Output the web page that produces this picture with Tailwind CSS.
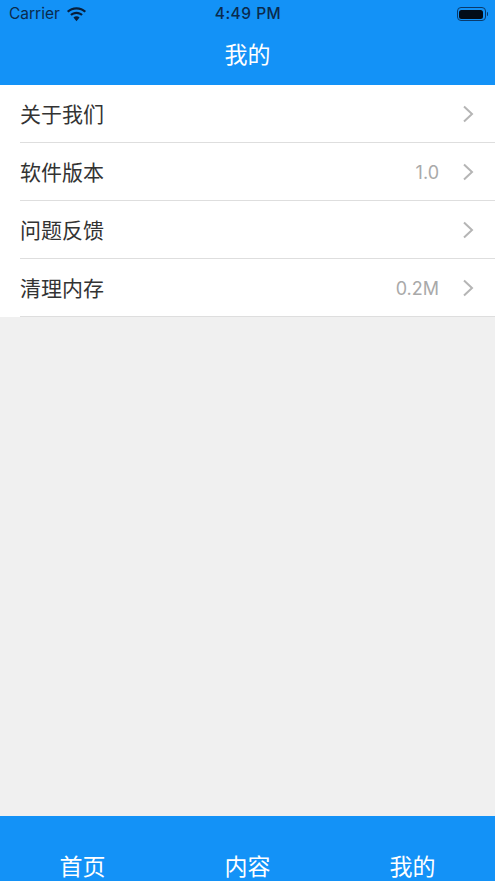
<!DOCTYPE html>
<html lang="zh">
<head>
<meta charset="utf-8">
<title>我的</title>
<script src="https://cdn.jsdelivr.net/npm/@tailwindcss/browser@4"></script>
</head>
<body class="bg-[#f0f0f0] font-['Noto_Sans_CJK_SC','Noto_Sans',sans-serif]">
<div class="flex flex-col w-[495px] h-[881px] overflow-hidden">
    <!-- Header -->
    <div class="bg-[#1392f7] h-[85px] shrink-0 flex flex-col">
        <div class="h-[28px] flex items-center justify-between pl-[9px] pr-[7px] text-[#0a2a4d] font-['Inter',sans-serif]">
            <div class="flex items-center gap-[6px] w-[150px]">
                <span class="text-[15.500px]">Carrier</span>
                <svg width="21" height="15" viewBox="0 0 20 14" fill="#071f3c">
                    <path d="M10 2.200c3 0 5.600 1.100 7.600 3l1.500-1.600C16.700 1.300 13.500 0 10 0S3.300 1.300.9 3.600l1.500 1.600c2-1.900 4.600-3 7.600-3z"/>
                    <path d="M10 6.500c1.800 0 3.300.7 4.500 1.800l1.500-1.600C14.400 5.200 12.300 4.300 10 4.300S5.600 5.200 4 6.700l1.500 1.600C6.700 7.200 8.200 6.500 10 6.500z"/>
                    <path d="M10 8.700c-1.100 0-2.100.4-2.900 1.100L10 13.500l2.900-3.700c-.8-.7-1.800-1.100-2.900-1.100z"/>
                </svg>
            </div>
            <span class="text-[15.500px] font-medium tracking-[0.5px] pr-[1px]">4:49 PM</span>
            <div class="flex items-center justify-end w-[150px]">
                <div class="w-[29px] h-[14px] rounded-[4px] border border-[#0a3a6b] p-[1.5px]">
                    <div class="w-full h-full rounded-[2.5px] bg-[#020c18]"></div>
                </div>
                <div class="w-[1.5px] h-[4px] bg-[#0a3a6b] rounded-r-sm ml-[1px]"></div>
            </div>
        </div>
        <div class="flex-1 flex items-center justify-center text-white text-[23px] leading-none pb-[7px]">我的</div>
    </div>

    <!-- Settings list -->
    <div class="bg-white shrink-0 text-[#333333]">
        <div class="h-[58px] ml-[20px] pr-[21px] border-b border-[#dedede] flex items-center justify-between">
            <span class="text-[21px] leading-none">关于我们</span>
            <div class="flex items-center">
                <svg width="12" height="18" viewBox="0 0 12 18" fill="none" stroke="#b5b5b5" stroke-width="2"><path d="M2 1.500 L10 9 L2 16.500"/></svg>
            </div>
        </div>
        <div class="h-[58px] ml-[20px] pr-[21px] border-b border-[#dedede] flex items-center justify-between">
            <span class="text-[21px] leading-none">软件版本</span>
            <div class="flex items-center gap-[23px]">
                <span class="text-[18px] text-[#a9a9a9] font-['Inter',sans-serif] pt-[2px]">1.0</span>
                <svg width="12" height="18" viewBox="0 0 12 18" fill="none" stroke="#b5b5b5" stroke-width="2"><path d="M2 1.500 L10 9 L2 16.500"/></svg>
            </div>
        </div>
        <div class="h-[58px] ml-[20px] pr-[21px] border-b border-[#dedede] flex items-center justify-between">
            <span class="text-[21px] leading-none">问题反馈</span>
            <div class="flex items-center">
                <svg width="12" height="18" viewBox="0 0 12 18" fill="none" stroke="#b5b5b5" stroke-width="2"><path d="M2 1.500 L10 9 L2 16.500"/></svg>
            </div>
        </div>
        <div class="h-[58px] ml-[20px] pr-[21px] border-b border-[#dedede] flex items-center justify-between">
            <span class="text-[21px] leading-none">清理内存</span>
            <div class="flex items-center gap-[23px]">
                <span class="text-[18px] text-[#a9a9a9] font-['Inter',sans-serif] pt-[2px]">0.2M</span>
                <svg width="12" height="18" viewBox="0 0 12 18" fill="none" stroke="#b5b5b5" stroke-width="2"><path d="M2 1.500 L10 9 L2 16.500"/></svg>
            </div>
        </div>
    </div>

    <div class="flex-1"></div>

    <!-- Tab bar -->
    <div class="bg-[#1392f7] h-[65px] shrink-0 grid grid-cols-3 pt-[38px] text-white text-[23px] leading-[23px] text-center">
        <span>首页</span>
        <span>内容</span>
        <span>我的</span>
    </div>
</div>
</body>
</html>
